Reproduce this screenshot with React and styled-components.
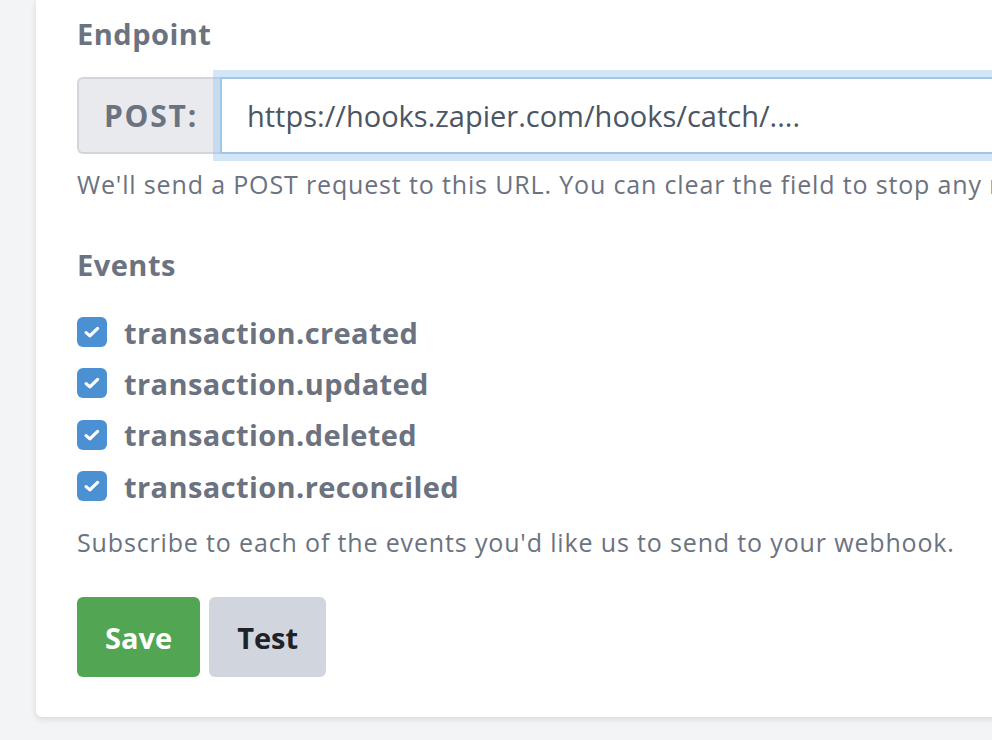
import React, { useState } from 'react';
import styled, { createGlobalStyle } from 'styled-components';

const events = [
  'transaction.created',
  'transaction.updated',
  'transaction.deleted',
  'transaction.reconciled',
];

const App = () => {
  const [url, setUrl] = useState('https://hooks.zapier.com/hooks/catch/....');
  const [checked, setChecked] = useState(events.map(() => true));

  const toggle = (idx) => {
    setChecked(checked.map((c, i) => (i === idx ? !c : c)));
  };

  return (
    <Page>
      <GlobalStyle />
      <Card>
        <Heading>Endpoint</Heading>
        <InputGroup>
          <Addon>POST:</Addon>
          <UrlInput value={url} onChange={(e) => setUrl(e.target.value)} />
        </InputGroup>
        <Help>
          We'll send a POST request to this URL. You can clear the field to stop any requests.
        </Help>

        <Heading spaced>Events</Heading>
        <EventList>
          {events.map((ev, idx) => (
            <EventRow key={ev} onClick={() => toggle(idx)}>
              <Check on={checked[idx]}>
                {checked[idx] && (
                  <svg width="20" height="20" viewBox="0 0 16 16">
                    <path
                      d="M3.3 8.5 L6.3 11.1 L12.5 5.1"
                      fill="none"
                      stroke="#fff"
                      strokeWidth="2.6"
                      strokeLinecap="round"
                      strokeLinejoin="round"
                    />
                  </svg>
                )}
              </Check>
              <EventName>{ev}</EventName>
            </EventRow>
          ))}
        </EventList>
        <Help top={18}>Subscribe to each of the events you'd like us to send to your webhook.</Help>

        <Actions>
          <Button variant="save">Save</Button>
          <Button variant="test">Test</Button>
        </Actions>
      </Card>
    </Page>
  );
};

export default App;

const GlobalStyle = createGlobalStyle`
  html, body {
    margin: 0;
    padding: 0;
    background: #f3f4f6;
    overflow: hidden;
  }
  * {
    box-sizing: border-box;
  }
`;

const Page = styled.div`
  width: 992px;
  height: 740px;
  padding-left: 36px;
  font-family: "Open Sans", Lato, sans-serif;
`;

const Card = styled.div`
  width: 1100px;
  padding: 14px 0 40px 41px;
  background: #fff;
  border-radius: 0 0 6px 6px;
  box-shadow: 0 2px 6px rgba(0, 0, 0, 0.12);
`;

const Heading = styled.h3`
  margin: ${(p) => (p.spaced ? '43px' : '0')} 0 0;
  font-size: 29px;
  line-height: 40px;
  font-weight: 700;
  letter-spacing: 0.5px;
  color: #6b7280;
`;

const InputGroup = styled.div`
  display: flex;
  margin-top: 23px;
  height: 77px;
`;

const Addon = styled.span`
  display: flex;
  align-items: center;
  justify-content: center;
  width: 143px;
  padding-left: 3px;
  background: #e9eaee;
  border: 2px solid #d2d6dc;
  border-right: none;
  border-radius: 6px 0 0 6px;
  font-size: 30px;
  font-weight: 700;
  letter-spacing: 1.8px;
  color: #6b7280;
`;

const UrlInput = styled.input`
  position: relative;
  z-index: 1;
  flex: 1;
  height: 77px;
  padding: 0 25px;
  border: 2px solid #9fc7e8;
  outline: none;
  box-shadow: 0 0 0 7px rgba(150, 195, 235, 0.42);
  font-family: inherit;
  font-size: 29px;
  color: #4b5563;
  background: #fff;
`;

const Help = styled.p`
  margin: ${(p) => p.top || 12}px 0 0;
  font-size: 25px;
  line-height: 36px;
  letter-spacing: 0.85px;
  color: #6b7280;
  white-space: nowrap;
`;

const EventList = styled.div`
  display: flex;
  flex-direction: column;
  gap: 11.4px;
  margin-top: 27px;
`;

const EventRow = styled.label`
  display: flex;
  align-items: center;
  gap: 17px;
  height: 40px;
  cursor: pointer;
`;

const Check = styled.span`
  display: flex;
  align-items: center;
  justify-content: center;
  width: 30px;
  height: 30px;
  border-radius: 6px;
  background: ${(p) => (p.on ? '#4a90d2' : '#fff')};
  border: ${(p) => (p.on ? 'none' : '2px solid #d1d5db')};
`;

const EventName = styled.span`
  font-size: 29px;
  font-weight: 700;
  letter-spacing: 0.4px;
  color: #6b7280;
`;

const Actions = styled.div`
  display: flex;
  gap: 9px;
  margin-top: 37px;
`;

const Button = styled.button`
  height: 80px;
  padding: 0 28px;
  border: none;
  border-radius: 6px;
  font-family: inherit;
  font-size: 29px;
  font-weight: 700;
  cursor: pointer;
  background: ${(p) => (p.variant === 'save' ? '#52a552' : '#d1d6de')};
  color: ${(p) => (p.variant === 'save' ? '#fff' : '#1f2328')};
`;
